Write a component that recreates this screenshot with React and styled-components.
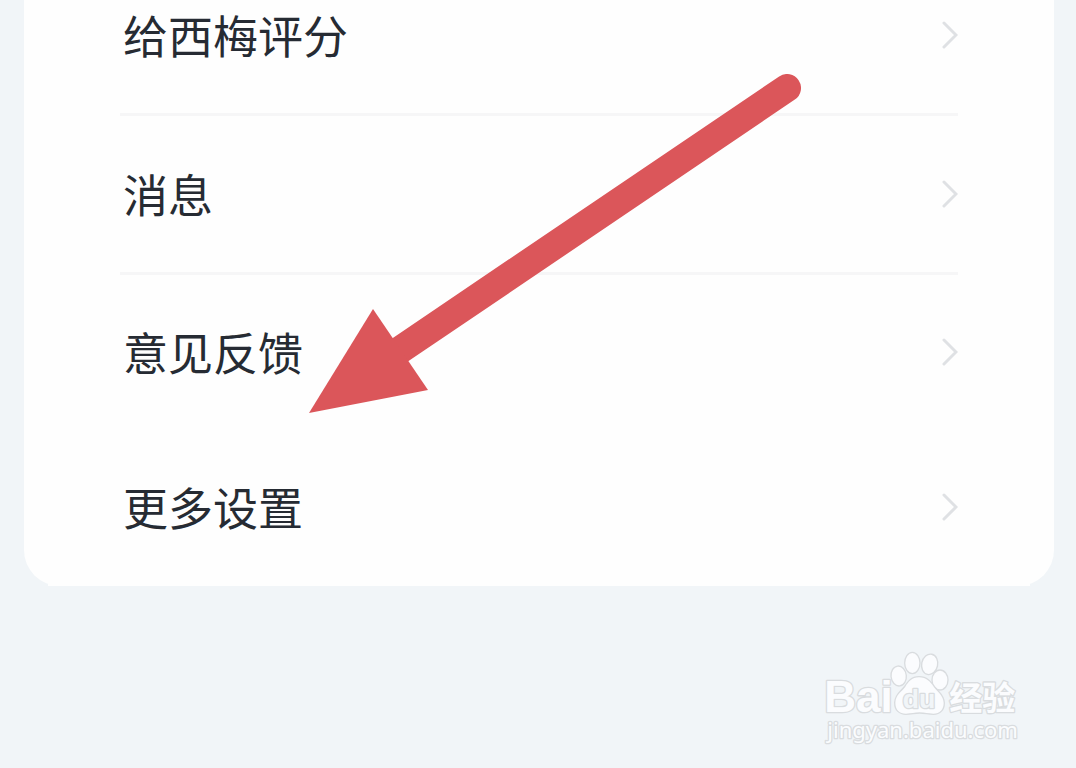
import styled, { createGlobalStyle } from "styled-components";

const GlobalStyle = createGlobalStyle`
  * {
    box-sizing: border-box;
  }
  body {
    margin: 0;
    background-color: #f1f5f8;
    font-family: "Noto Sans CJK SC", sans-serif;
  }
`;

const Page = styled.main`
  position: relative;
  min-height: 100vh;
  padding: 0 22px 0 24px;
  overflow: hidden;
`;

const Card = styled.ul`
  position: relative;
  list-style: none;
  margin: -43px 0 0;
  padding: 0 96px 1px;
  background-color: #fefefe;
  border-radius: 0 0 36px 36px;
  &::after {
    content: "";
    position: absolute;
    left: 24px;
    right: 24px;
    bottom: 0;
    height: 2px;
    background-color: #fefefe;
  }
`;

const Item = styled.li`
  border-bottom: ${(props) => (props.$divided ? "3px solid #f6f6f7" : "none")};
`;

const ItemButton = styled.button`
  width: 100%;
  height: ${(props) => (props.$tall ? 156 : 155)}px;
  display: flex;
  align-items: center;
  justify-content: space-between;
  border: none;
  background: none;
  padding: 0 0 1px 3px;
  color: #262b33;
  font-family: inherit;
  font-size: 45px;
  line-height: 64px;
  cursor: pointer;
`;

const Chevron = styled.svg`
  width: 16px;
  height: 28px;
  fill: none;
  stroke: #dfe1e4;
  stroke-width: 3;
  stroke-linecap: round;
`;

const Arrow = styled.svg`
  position: absolute;
  left: 309px;
  top: 74px;
  width: 492px;
  height: 340px;
  pointer-events: none;
`;

const Watermark = styled.svg`
  position: absolute;
  right: 46px;
  bottom: 13px;
  width: 220px;
  height: 115px;
  fill: #fbfcfe;
  stroke: #d9dcdf;
  stroke-width: 8;
  stroke-linejoin: round;
  paint-order: stroke;
`;

const BrandText = styled.text`
  font-family: "Liberation Sans", sans-serif;
  font-weight: 700;
  font-size: 132px;
`;

const PawText = styled.text`
  font-family: "Liberation Sans", sans-serif;
  font-weight: 700;
  font-size: 80px;
  fill: #f1f5f8;
`;

const BrandHan = styled.text`
  font-family: "Noto Sans CJK SC", sans-serif;
  font-weight: 700;
  font-size: 99px;
`;

const SiteText = styled.text`
  font-family: "Noto Sans", sans-serif;
  font-size: 66px;
`;

const items = [
  { title: "给西梅评分", divided: true },
  { title: "消息", divided: true },
  { title: "意见反馈", divided: false },
  { title: "更多设置", divided: false },
];

function App() {
  return (
    <>
      <GlobalStyle />
      <Page>
        <Card>
          {items.map((item) => (
            <Item key={item.title} $divided={item.divided}>
              <ItemButton type="button" $tall={item.divided}>
                {item.title}
                <Chevron viewBox="0 0 16 28" aria-hidden="true">
                  <path d="M2 2L14 14L2 26" />
                </Chevron>
              </ItemButton>
            </Item>
          ))}
        </Card>
        <Arrow viewBox="0 0 492 340" aria-hidden="true">
          <path
            d="M478 14L88 278"
            stroke="#db565a"
            strokeWidth="28"
            strokeLinecap="round"
          />
          <path d="M0 339L64 235L119 316Z" fill="#db565a" />
        </Arrow>
        <Watermark viewBox="0 0 660 345">
          <BrandText x="43" y="217">
            Bai
          </BrandText>
          <ellipse cx="266" cy="108" rx="21" ry="28" transform="rotate(-6 266 108)" />
          <ellipse cx="307" cy="69" rx="21" ry="30" />
          <ellipse cx="359" cy="73" rx="22" ry="29" transform="rotate(12 359 73)" />
          <ellipse cx="390" cy="120" rx="22" ry="28" />
          <path d="M327 112C305 112 295 126 286 140C274 156 257 164 256 188C256 210 269 221 288 221C304 221 313 217 329 217C345 217 354 221 370 221C390 221 401 208 401 189C400 165 383 157 371 140C361 126 350 112 327 112Z" />
          <PawText x="278" y="204">
            du
          </PawText>
          <BrandHan x="418" y="209">
            经验
          </BrandHan>
          <SiteText x="52" y="294">
            jingyan.baidu.com
          </SiteText>
        </Watermark>
      </Page>
    </>
  );
}

export default App;
